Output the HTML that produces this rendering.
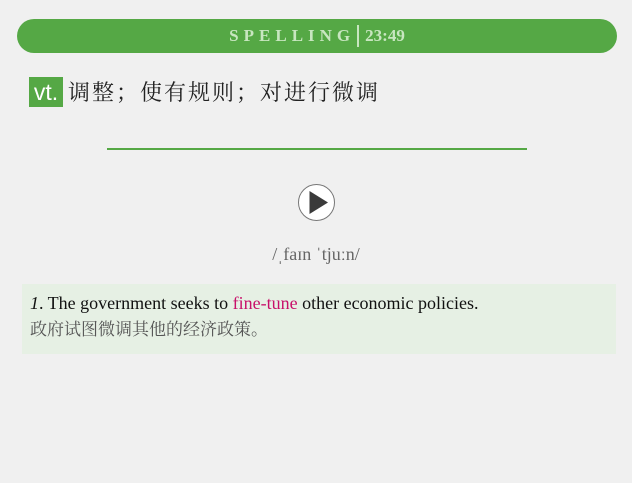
<!DOCTYPE html>
<html><head><meta charset="utf-8"><style>
body{margin:0;width:632px;height:483px;background:#f0f0f0;font-family:"Liberation Serif","Noto Serif CJK SC",serif;position:relative;overflow:hidden}
.bar{position:absolute;left:17px;top:19px;width:600px;height:34px;background:#55a845;border-radius:17px;color:#c8e6c0;text-align:center;line-height:34px;font-size:17px;font-weight:bold}
.bar .s{letter-spacing:5px}
.bar .sep{display:inline-block;width:2px;height:22px;background:#c8e6c0;vertical-align:middle;margin:0 6px 3px 2px}
.def{position:absolute;left:29px;top:77px;font-size:22px;letter-spacing:2px;color:#222;line-height:30px;font-family:"Noto Serif CJK SC","Liberation Serif",serif}
.tag{display:inline-block;background:#55a845;color:#fff;font-family:"Liberation Sans",sans-serif;font-size:23px;letter-spacing:0;width:34px;text-align:center;height:30px;line-height:30px;vertical-align:top;margin-right:5px}
.line{position:absolute;left:107px;top:148px;width:420px;height:2px;background:#55a845}
.play{position:absolute;left:298px;top:184px;width:35px;height:35px;border:1px solid #777;border-radius:50%;background:#fff}
.ph{position:absolute;left:0;width:632px;top:244px;text-align:center;color:#666;font-size:18px}
.ex{position:absolute;left:22px;top:284px;width:594px;height:70px;background:#e6f0e4}
.ex div{position:absolute;left:8px;font-size:18px;white-space:nowrap}
</style></head><body>
<div class="bar"><span class="s">SPELLING</span><span class="sep"></span>23:49</div>
<div class="def"><span class="tag">vt.</span>调整；使有规则；对进行微调</div>
<div class="line"></div>
<div class="play"><svg width="35" height="35" viewBox="0 0 35 35"><path d="M10.5 6 L29 17.5 L10.5 29 Z" fill="#3a3a3a"/></svg></div>
<div class="ph">/ˌfaɪn ˈtjuːn/</div>
<div class="ex">
<div style="top:9px;color:#111"><i>1</i>. The government seeks to <span style="color:#c8106a">fine-tune</span> other economic policies.</div>
<div style="top:31px;color:#555;font-family:'Noto Serif CJK SC','Liberation Serif',serif;font-size:17px">政府试图微调其他的经济政策。</div>
</div>
</body></html>
